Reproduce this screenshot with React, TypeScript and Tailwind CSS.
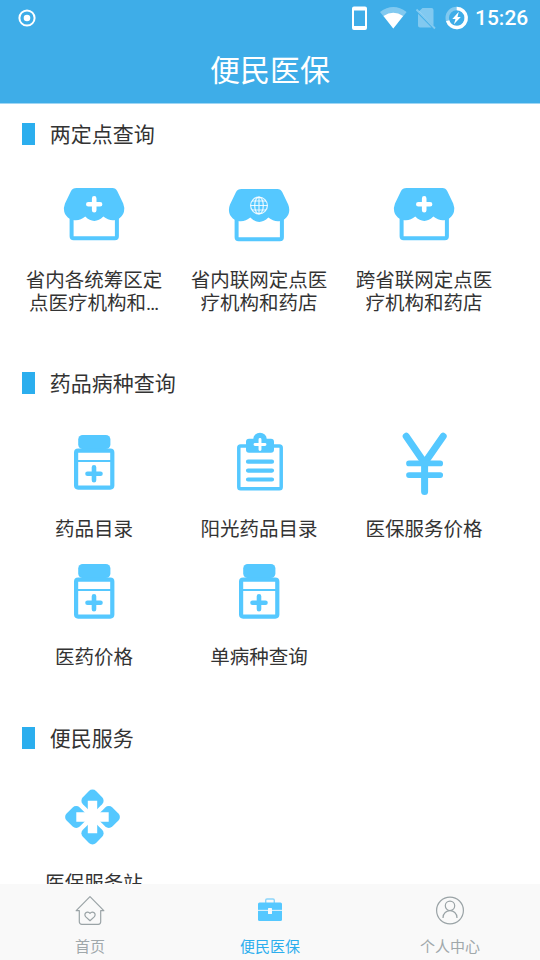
import type { ReactNode } from "react";

function StoreIcon({ children, className = "" }: { children: ReactNode; className?: string }) {
  return (
    <svg viewBox="0 0 66 66" className={`size-[66px] ${className}`} fill="none">
      <path d="M10.600 34V55.300a2 2 0 0 0 2 2H53.900a2 2 0 0 0 2-2V34" stroke="#55c8ff" strokeWidth="4" />
      <path
        d="M15.500 7H51.500Q54.700 7 56.200 10L62.200 22.500Q63.800 26.500 63 30.500C62 35 57.500 39.200 53 39.200Q47.500 39.700 42.300 35.600Q38 39.900 33.300 39.900Q28.500 39.900 24.300 35.600Q19.500 39.700 13.500 39.200C8.500 38.800 4.200 35 3.200 30.500Q2.400 26.500 4 22.500L9.900 10.200Q11.500 7 15.500 7Z"
        fill="#55c8ff"
      />
      {children}
    </svg>
  );
}

function ClinicIcon() {
  return (
    <StoreIcon>
      <path d="M33.200 17.400v11.800M27.300 23.300h11.800" stroke="#fff" strokeWidth="4.600" strokeLinecap="round" />
    </StoreIcon>
  );
}

function NetworkIcon() {
  return (
    <StoreIcon className="relative top-px">
      <g stroke="#fff" strokeOpacity=".85" strokeWidth="1.200">
        <circle cx="33" cy="23.500" r="8.400" />
        <ellipse cx="33" cy="23.500" rx="4.300" ry="8.400" />
        <path d="M33 15.100v16.800M24.600 23.500h16.800M26 19h14M26 28h14" />
      </g>
    </StoreIcon>
  );
}

function BottleIcon() {
  return (
    <svg viewBox="0 0 66 66" className="size-[66px]" fill="none" stroke="#55c8ff">
      <rect x="17.200" y="5" width="32.200" height="14" rx="4.500" fill="#55c8ff" stroke="none" />
      <rect x="15.100" y="20.600" width="36.200" height="37" rx="2" strokeWidth="4.200" />
      <path d="M15 31h36.500" strokeWidth="2" />
      <path d="M33 37.200v13M26.500 43.700h13" strokeWidth="4.600" strokeLinecap="round" />
    </svg>
  );
}

function ClipboardIcon() {
  return (
    <svg viewBox="0 0 66 66" className="size-[66px]" fill="none" stroke="#55c8ff">
      <rect x="12.800" y="16" width="42.400" height="42.800" rx="1.800" strokeWidth="3.500" />
      <path d="M23 8.800h4.300a6.700 6 0 0 1 13.400 0H45a3 3 0 0 1 3 3v8a3 3 0 0 1-3 3H23a3 3 0 0 1-3-3v-8a3 3 0 0 1 3-3Z" fill="#55c8ff" stroke="none" />
      <path d="M34 9.500v10M29 14.500h10" stroke="#fff" strokeWidth="2.900" strokeLinecap="round" />
      <path d="M22 31.700h24M22 40.600h24M22 49.500h24" strokeWidth="4.200" strokeLinecap="round" />
    </svg>
  );
}

function YuanIcon() {
  return (
    <svg viewBox="0 0 66 66" className="size-[66px]" fill="none" stroke="#55c8ff" strokeLinecap="round">
      <path d="M15.200 6.300 33.600 33 52.200 6.300M33.600 33v28.500" strokeWidth="7" strokeLinejoin="round" />
      <path d="M18 33.400h31.200M18 45.100h31.200" strokeWidth="5.700" />
    </svg>
  );
}

function StationIcon() {
  return (
    <svg viewBox="0 0 66 66" className="size-[66px]" fill="#55c8ff">
      <g transform="translate(31.500 32)">
        <rect x="-9.300" y="-9.300" width="18.600" height="18.600" rx="5" transform="translate(0 -16.300) rotate(45)" />
        <rect x="-9.300" y="-9.300" width="18.600" height="18.600" rx="5" transform="translate(0 16.300) rotate(45)" />
        <rect x="-9.300" y="-9.300" width="18.600" height="18.600" rx="5" transform="translate(-16.300 0) rotate(45)" />
        <rect x="-9.300" y="-9.300" width="18.600" height="18.600" rx="5" transform="translate(16.300 0) rotate(45)" />
        <path d="M0-16.200v32.400M-16.200 0h32.400" stroke="#fff" strokeWidth="9.400" />
      </g>
    </svg>
  );
}

const sections = [
  {
    title: "两定点查询",
    items: [
      { label: ["省内各统筹区定", "点医疗机构和…"], icon: <ClinicIcon /> },
      { label: ["省内联网定点医", "疗机构和药店"], icon: <NetworkIcon /> },
      { label: ["跨省联网定点医", "疗机构和药店"], icon: <ClinicIcon /> },
    ],
  },
  {
    title: "药品病种查询",
    items: [
      { label: ["药品目录"], icon: <BottleIcon /> },
      { label: ["阳光药品目录"], icon: <ClipboardIcon /> },
      { label: ["医保服务价格"], icon: <YuanIcon /> },
      { label: ["医药价格"], icon: <BottleIcon /> },
      { label: ["单病种查询"], icon: <BottleIcon /> },
    ],
  },
  {
    title: "便民服务",
    items: [{ label: ["医保服务站"], icon: <StationIcon /> }],
  },
];

function StatusBar() {
  return (
    <div className="flex h-9 items-center justify-between pr-3 pl-[18px]">
      <svg viewBox="0 0 18 18" className="size-[18px]" fill="none">
        <circle cx="9" cy="9" r="7.600" stroke="#fff" strokeWidth="2" />
        <circle cx="9" cy="9" r="3.300" fill="#fff" />
      </svg>
      <div className="flex items-center">
        <svg viewBox="340 0 130 36" className="h-9 w-[130px]" fill="none">
          <path fillRule="evenodd" d="M354 6.500h11a2 2 0 0 1 2 2v19.500a2 2 0 0 1-2 2h-11a2 2 0 0 1-2-2V8.500a2 2 0 0 1 2-2ZM354 10.500v15.500h11V10.500Z" fill="#fff" />
          <path d="M393.300 28.500 380 12Q393.300 2 406.600 12Z" fill="#fff" fillOpacity=".35" />
          <path d="M393.300 28.500 383.500 16Q393.300 9.500 403.100 16Z" fill="#fff" />
          <path d="M422.500 8H431.500a2 2 0 0 1 2 2v15.500L419 11.300ZM418 13.800 431.500 27.500H420a2 2 0 0 1-2-2Z" fill="#fff" fillOpacity=".35" />
          <path d="M416.500 9.500 435 28.500" stroke="#fff" strokeOpacity=".35" strokeWidth="1.800" />
          <circle cx="456.700" cy="18" r="9.500" stroke="#fff" strokeOpacity=".35" strokeWidth="3.400" />
          <path d="M456.700 8.500a9.500 9.500 0 1 1-9.100 12.200" stroke="#fff" strokeWidth="3.400" />
          <path d="m458.800 11.800-6.500 7.200h3.200l-1.600 5.200 6.900-7.200h-3.300Z" fill="#fff" />
        </svg>
        <span className="ml-[5px] w-[53px] font-['Roboto',sans-serif] text-[21px] leading-[38px] font-medium whitespace-nowrap text-white">
          15:26
        </span>
      </div>
    </div>
  );
}

function NavItem({ label, active, children }: { label: string; active?: boolean; children: ReactNode }) {
  return (
    <div className={`flex flex-1 flex-col items-center pt-[11px] ${active ? "text-[#2baeee]" : "text-[#a0a8ab]"}`}>
      <svg viewBox="0 0 30 30" className="size-[30px]" fill="none">
        {children}
      </svg>
      <span className="mt-[11px] text-[15px] leading-[22px]">{label}</span>
    </div>
  );
}

export default function App() {
  return (
    <div className="flex h-[960px] w-[540px] flex-col overflow-hidden bg-white font-['Roboto','Noto_Sans_CJK_SC',sans-serif] text-[#333]">
      <header className="h-[104px] shrink-0 border-b border-[#9fd6f4] bg-[#3eade8]">
        <StatusBar />
        <h1 className="text-center text-[30px] leading-[70px] text-white">便民医保</h1>
      </header>

      <main className="-mt-px min-h-0 flex-1 overflow-hidden">
        {sections.map((section) => (
          <section key={section.title} className="pt-5 pb-[19.5px]">
            <div className="flex h-[22.5px] items-center pl-[22.4px]">
              <span className="h-[22px] w-[12.3px] bg-[#2baeee]" />
              <h2 className="mt-[1.5px] ml-[15px] text-[21px] leading-[22px]">{section.title}</h2>
            </div>
            <div className="mt-[35.5px] ml-[11.5px] grid w-[495px] grid-cols-3">
              {section.items.map((item) => (
                <div key={item.label.join("")} className="flex flex-col items-center pb-[18px]">
                  {item.icon}
                  <p className="mt-[21.5px] text-center text-[19.5px] leading-[23px]">
                    {item.label.map((line) => (
                      <span key={line} className="block">
                        {line}
                      </span>
                    ))}
                  </p>
                </div>
              ))}
            </div>
          </section>
        ))}
      </main>

      <nav className="flex h-[76px] shrink-0 bg-[#f9f9f9]">
        <NavItem label="首页">
          <g stroke="#9aa3a6" strokeWidth="1.200" strokeLinejoin="round">
            <path d="M4.300 15.700H1.200L15 1.600l13.800 14.100h-3.100v11.100a2.500 2.500 0 0 1-2.500 2.500H6.800a2.500 2.500 0 0 1-2.500-2.500Z" />
            <path d="M15 25.700 10.800 21.900c-2.800-3.100 1.500-6.900 4.200-3.600 2.700-3.300 7 .5 4.200 3.600Z" />
          </g>
        </NavItem>
        <NavItem label="便民医保" active>
          <path d="M10.700 8V5.300a1.300 1.300 0 0 1 1.300-1.300h6a1.300 1.300 0 0 1 1.300 1.300V8" stroke="#8cd5fa" strokeWidth="1.400" />
          <rect x="3" y="7.600" width="24" height="18.400" rx="1.500" fill="#55c8ff" />
          <path d="M3 15.400h24" stroke="#d5f0fd" strokeWidth="1.200" />
          <rect x="13" y="13" width="4" height="6" rx=".5" fill="#f9f9f9" />
        </NavItem>
        <NavItem label="个人中心">
          <g stroke="#9aa3a6" strokeWidth="1.200">
            <circle cx="15" cy="15.500" r="13.400" />
            <circle cx="15" cy="10.800" r="4.700" />
            <path d="M8 22.900c0-9.600 14-9.600 14 0" />
          </g>
        </NavItem>
      </nav>
    </div>
  );
}
